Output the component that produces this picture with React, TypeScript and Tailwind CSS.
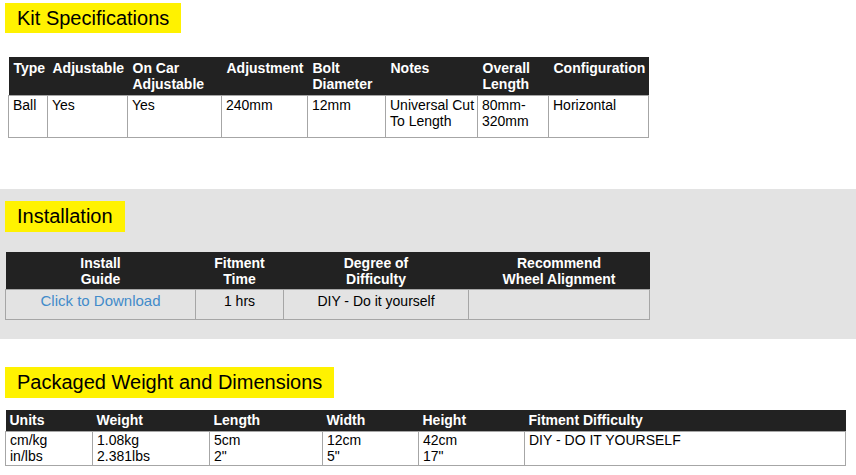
export default function App() {
  const font = { fontFamily: '"Liberation Sans", Arial, sans-serif' };

  const kitCols = [
    { label: ["Type"], w: 39 },
    { label: ["Adjustable"], w: 80 },
    { label: ["On Car", "Adjustable"], w: 94 },
    { label: ["Adjustment"], w: 86 },
    { label: ["Bolt", "Diameter"], w: 78 },
    { label: ["Notes"], w: 92 },
    { label: ["Overall", "Length"], w: 71 },
    { label: ["Configuration"], w: 100 },
  ];
  const kitRow = [["Ball"], ["Yes"], ["Yes"], ["240mm"], ["12mm"], ["Universal Cut", "To Length"], ["80mm-", "320mm"], ["Horizontal"]];

  const instCols = [
    { label: ["Install", "Guide"], w: 190 },
    { label: ["Fitment", "Time"], w: 88 },
    { label: ["Degree of", "Difficulty"], w: 185 },
    { label: ["Recommend", "Wheel Alignment"], w: 181 },
  ];

  const dimCols = [
    { label: "Units", w: 87 },
    { label: "Weight", w: 117 },
    { label: "Length", w: 113 },
    { label: "Width", w: 96 },
    { label: "Height", w: 106 },
    { label: "Fitment Difficulty", w: 321 },
  ];
  const dimRow = [["cm/kg", "in/lbs"], ["1.08kg", "2.381lbs"], ["5cm", "2\""], ["12cm", "5\""], ["42cm", "17\""], ["DIY - DO IT YOURSELF"]];

  return (
    <div className="w-[856px] h-[475px] bg-white text-black overflow-hidden" style={font}>
      {/* Kit Specifications */}
      <div className="pt-[3px] pl-[5px]">
        <h2 className="inline-block bg-[#fff200] px-3 text-[20px] leading-[30px] font-normal">Kit Specifications</h2>
      </div>
      <table className="ml-[8px] mt-[24px] table-fixed border-collapse w-[640px] text-[14px] leading-[16px]">
        <colgroup>
          {kitCols.map((c, i) => <col key={i} style={{ width: c.w }} />)}
        </colgroup>
        <thead>
          <tr className="bg-[#222222] text-white">
            {kitCols.map((c, i) => (
              <th key={i} className="text-left align-top font-bold pl-[5px] pr-[2px] pt-[3px] pb-[1px] h-[38px]">
                {c.label.map((l, j) => <div key={j}>{l}</div>)}
              </th>
            ))}
          </tr>
        </thead>
        <tbody>
          <tr>
            {kitRow.map((v, i) => (
              <td key={i} className="border border-[#a6a6a6] align-top pl-[4px] pr-[2px] pt-[1px] pb-[5px] h-[42px]">
                {v.map((l, j) => <div key={j}>{l}</div>)}
              </td>
            ))}
          </tr>
        </tbody>
      </table>

      {/* Installation */}
      <div className="mt-[51px] bg-[#e3e3e3] h-[150px] pt-[12px] pl-[5px]">
        <h2 className="inline-block bg-[#fff200] px-3 text-[20px] leading-[31px] font-normal">Installation</h2>
        <table className="mt-[20px] table-fixed border-collapse w-[644px] text-[14px] leading-[16px]">
          <colgroup>
            {instCols.map((c, i) => <col key={i} style={{ width: c.w }} />)}
          </colgroup>
          <thead>
            <tr className="bg-[#222222] text-white">
              {instCols.map((c, i) => (
                <th key={i} className="text-center align-top font-bold px-1 pt-[3px] pb-[1px] h-[38px]">
                  {c.label.map((l, j) => <div key={j}>{l}</div>)}
                </th>
              ))}
            </tr>
          </thead>
          <tbody>
            <tr className="text-center h-[30px]">
              <td className="border border-[#a6a6a6] pt-[2px] pb-[9px] text-[15px] text-[#428bca]">Click to Download</td>
              <td className="border border-[#a6a6a6] pt-[2px] pb-[9px]">1 hrs</td>
              <td className="border border-[#a6a6a6] pt-[2px] pb-[9px]">DIY - Do it yourself</td>
              <td className="border border-[#a6a6a6] pt-[2px] pb-[9px]"></td>
            </tr>
          </tbody>
        </table>
      </div>

      {/* Packaged Weight and Dimensions */}
      <div className="pt-[28px] pl-[5px]">
        <h2 className="inline-block bg-[#fff200] px-3 text-[20px] leading-[31px] font-normal">Packaged Weight and Dimensions</h2>
        <table className="mt-[12px] table-fixed border-collapse w-[840px] text-[14px] leading-[15px]">
          <colgroup>
            {dimCols.map((c, i) => <col key={i} style={{ width: c.w }} />)}
          </colgroup>
          <thead>
            <tr className="bg-[#222222] text-white">
              {dimCols.map((c, i) => (
                <th key={i} className="text-left font-bold pl-[4px] pt-[3px] pb-[3px] leading-[15px]">{c.label}</th>
              ))}
            </tr>
          </thead>
          <tbody>
            <tr>
              {dimRow.map((v, i) => (
                <td key={i} className="border border-[#a6a6a6] align-top pl-[4px] pt-0 pb-[1px] leading-[16px]">
                  {v.map((l, j) => <div key={j}>{l}</div>)}
                </td>
              ))}
            </tr>
          </tbody>
        </table>
      </div>
    </div>
  );
}
